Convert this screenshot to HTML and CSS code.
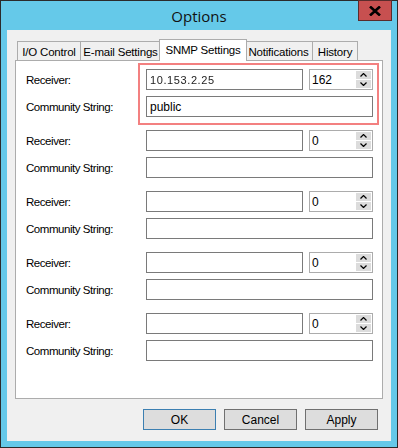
FILE: index.html
```html
<!DOCTYPE html>
<html>
<head>
<meta charset="utf-8">
<link rel="stylesheet" href="styles.css">
</head>
<body>
<div class="window">
  <div class="titlebar">
    <span class="title">Options</span>
    <div class="close"><svg width="12" height="10" viewBox="0 0 12 10"><path d="M1 0.5 L11 9.5 M11 0.5 L1 9.5" stroke="#000" stroke-width="2.6"/></svg></div>
  </div>
  <div class="client">
    <div class="tabs">
      <div class="tab t1">I/O Control</div>
      <div class="tab t2">E-mail Settings</div>
      <div class="tab t3 active">SNMP Settings</div>
      <div class="tab t4">Notifications</div>
      <div class="tab t5">History</div>
    </div>
    <div class="panel">
      <div class="group">
        <div class="row"><span class="label">Receiver:</span><div class="input recv"><span class="blur">10.153.2.25</span></div><div class="spin"><div class="num">162</div><div class="arrows"><div class="arr"><svg width="7" height="4" viewBox="0 0 7 4"><path d="M0.5 3.5 L3.5 0.5 L6.5 3.5" fill="none" stroke="#000" stroke-width="1.2"/></svg></div><div class="arr"><svg width="7" height="4" viewBox="0 0 7 4"><path d="M0.5 0.5 L3.5 3.5 L6.5 0.5" fill="none" stroke="#000" stroke-width="1.2"/></svg></div></div></div></div>
        <div class="row"><span class="label">Community String:</span><div class="input comm">public</div></div>
      </div>
      <div class="group">
        <div class="row"><span class="label">Receiver:</span><div class="input recv"></div><div class="spin"><div class="num">0</div><div class="arrows"><div class="arr"><svg width="7" height="4" viewBox="0 0 7 4"><path d="M0.5 3.5 L3.5 0.5 L6.5 3.5" fill="none" stroke="#000" stroke-width="1.2"/></svg></div><div class="arr"><svg width="7" height="4" viewBox="0 0 7 4"><path d="M0.5 0.5 L3.5 3.5 L6.5 0.5" fill="none" stroke="#000" stroke-width="1.2"/></svg></div></div></div></div>
        <div class="row"><span class="label">Community String:</span><div class="input comm"></div></div>
      </div>
      <div class="group">
        <div class="row"><span class="label">Receiver:</span><div class="input recv"></div><div class="spin"><div class="num">0</div><div class="arrows"><div class="arr"><svg width="7" height="4" viewBox="0 0 7 4"><path d="M0.5 3.5 L3.5 0.5 L6.5 3.5" fill="none" stroke="#000" stroke-width="1.2"/></svg></div><div class="arr"><svg width="7" height="4" viewBox="0 0 7 4"><path d="M0.5 0.5 L3.5 3.5 L6.5 0.5" fill="none" stroke="#000" stroke-width="1.2"/></svg></div></div></div></div>
        <div class="row"><span class="label">Community String:</span><div class="input comm"></div></div>
      </div>
      <div class="group">
        <div class="row"><span class="label">Receiver:</span><div class="input recv"></div><div class="spin"><div class="num">0</div><div class="arrows"><div class="arr"><svg width="7" height="4" viewBox="0 0 7 4"><path d="M0.5 3.5 L3.5 0.5 L6.5 3.5" fill="none" stroke="#000" stroke-width="1.2"/></svg></div><div class="arr"><svg width="7" height="4" viewBox="0 0 7 4"><path d="M0.5 0.5 L3.5 3.5 L6.5 0.5" fill="none" stroke="#000" stroke-width="1.2"/></svg></div></div></div></div>
        <div class="row"><span class="label">Community String:</span><div class="input comm"></div></div>
      </div>
      <div class="group">
        <div class="row"><span class="label">Receiver:</span><div class="input recv"></div><div class="spin"><div class="num">0</div><div class="arrows"><div class="arr"><svg width="7" height="4" viewBox="0 0 7 4"><path d="M0.5 3.5 L3.5 0.5 L6.5 3.5" fill="none" stroke="#000" stroke-width="1.2"/></svg></div><div class="arr"><svg width="7" height="4" viewBox="0 0 7 4"><path d="M0.5 0.5 L3.5 3.5 L6.5 0.5" fill="none" stroke="#000" stroke-width="1.2"/></svg></div></div></div></div>
        <div class="row"><span class="label">Community String:</span><div class="input comm"></div></div>
      </div>
      <div class="highlight"></div>
    </div>
    <div class="buttons">
      <div class="btn default">OK</div>
      <div class="btn">Cancel</div>
      <div class="btn">Apply</div>
    </div>
  </div>
</div>
</body>
</html>
```

FILE: styles.css
```css
* { box-sizing: border-box; }
html, body { margin: 0; padding: 0; background: #fff; }
body { font-family: "Liberation Sans", Arial, sans-serif; font-size: 11.5px; color: #000; }

.window {
  position: relative;
  width: 398px;
  height: 448px;
  background: #65c9e9;
  border: 1px solid #2b2b2b;
  display: flex;
  flex-direction: column;
}
.titlebar {
  height: 29px;
  display: flex;
  align-items: center;
  justify-content: center;
}
.title {
  font-family: "Open Sans", "Liberation Sans", sans-serif;
  font-size: 15px;
  color: #111;
  margin-top: 1px;
}
.close {
  position: absolute;
  top: -1px;
  right: 5px;
  width: 34px;
  height: 21px;
  background: #c75050;
  border: 1px solid #5a2c2c;
  display: flex;
  align-items: center;
  justify-content: center;
}
.client {
  margin: 0 6px 6px 6px;
  flex: 1;
  background: #f0f0f0;
  display: flex;
  flex-direction: column;
  padding: 9px 8px 0 8px;
}
.tabs {
  display: flex;
  align-items: flex-end;
  height: 21px;
  padding-left: 2px;
  position: relative;
  z-index: 2;
}
.tab {
  height: 19px;
  border: 1px solid #acacac;
  border-bottom: none;
  background: #f0f0f0;
  display: flex;
  align-items: center;
  justify-content: center;
  padding-top: 1px;
  margin-left: -1px;
  letter-spacing: -0.2px;
}
.t1 { width: 64px; margin-left: 0; }
.t2 { width: 81px; }
.t3 { width: 88px; }
.t4 { width: 69px; }
.t5 { width: 46px; }
.tab.active {
  height: 22px;
  background: #fff;
  margin-left: -2px;
  margin-right: -2px;
  margin-bottom: -1px;
  padding-bottom: 2px;
  position: relative;
  z-index: 3;
}
.panel {
  position: relative;
  height: 339px;
  background: #fff;
  border: 1px solid #acacac;
  padding: 8px 0 0 10px;
  display: flex;
  flex-direction: column;
  gap: 13px;
}
.group {
  display: flex;
  flex-direction: column;
  gap: 6px;
}
.row {
  display: flex;
  align-items: center;
  height: 21px;
}
.label {
  width: 120px;
  letter-spacing: -0.45px;
}
.input {
  height: 21px;
  border: 1px solid #7a7a7a;
  background: #fff;
  display: flex;
  align-items: center;
  padding-left: 3px;
  font-size: 12px;
}
.recv { width: 157px; }
.comm { width: 227px; }
.blur {
  color: #222;
  letter-spacing: 0.6px;
  filter: blur(0.35px);
  font-size: 11px;
}
.spin {
  margin-left: 6px;
  width: 64px;
  height: 21px;
  border: 1px solid #acacac;
  background: #fff;
  display: flex;
}
.num {
  flex: 1;
  padding-left: 2px;
  display: flex;
  align-items: center;
  font-size: 12px;
}
.arrows {
  width: 16px;
  display: flex;
  flex-direction: column;
  gap: 1px;
  padding: 1px 1px 1px 0;
}
.arr {
  flex: 1;
  background: #dcdcdc;
  display: flex;
  align-items: center;
  justify-content: center;
}
.highlight {
  position: absolute;
  left: 122px;
  top: 2px;
  width: 241px;
  height: 62px;
  border: 2px solid #f38080;
}
.buttons {
  display: flex;
  justify-content: flex-end;
  gap: 8px;
  padding: 10px 5px 0 0;
}
.btn {
  width: 73px;
  height: 21px;
  border: 1px solid #707070;
  background: #dddddd;
  display: flex;
  align-items: center;
  justify-content: center;
  font-size: 12px;
}
.btn.default { border-color: #3c7fb1; }
```
